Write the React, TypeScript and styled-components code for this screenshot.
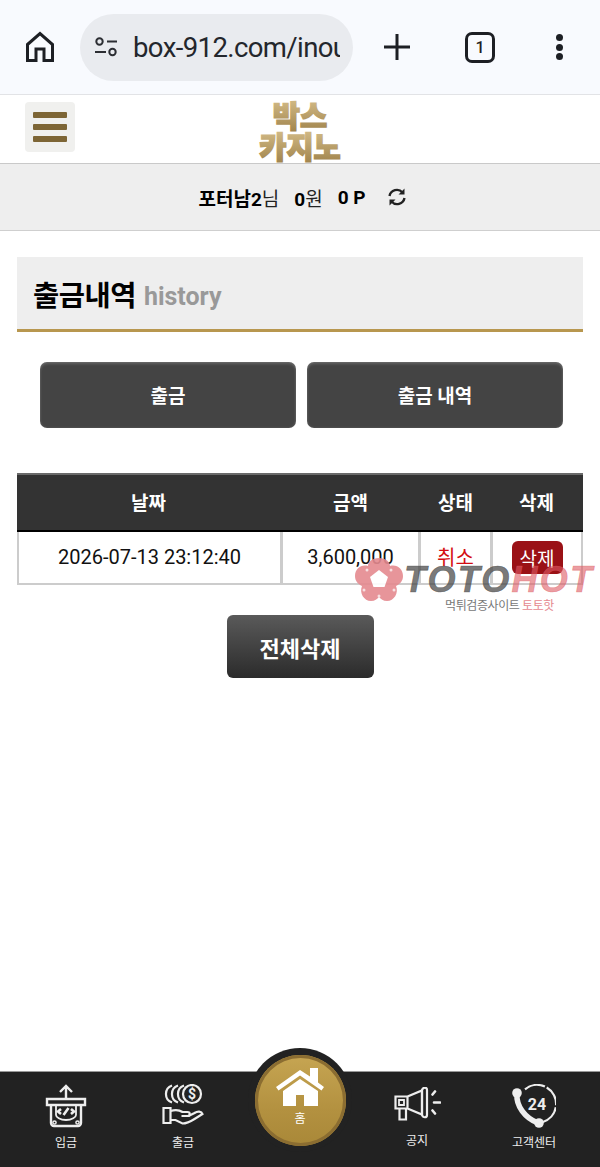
import styled, { createGlobalStyle } from "styled-components"

/////////////////////////////////////////////////////////////////////////////

const KR = `Roboto, "Noto Sans CJK KR", sans-serif`

const GlobalStyle = createGlobalStyle`
  html, body {
    margin: 0;
    padding: 0;
    background: #fff;
  }
  * {
    box-sizing: border-box;
  }
`

const App = () => {
  return (
    <Page>
      <GlobalStyle />

      <BrowserBar>
        <BarIcon>
          <svg width="30" height="32" viewBox="0 0 30 32" fill="none" stroke="#1d1f24" strokeWidth="3">
            <path d="M2.500 13.500 15 2.500l12.500 11V29.500H19V18h-8v11.500H2.500z" />
          </svg>
        </BarIcon>
        <AddressPill>
          <svg width="24" height="20" viewBox="0 0 24 20" fill="none" stroke="#2c2e33" strokeWidth="2">
            <circle cx="5.500" cy="4.500" r="3.200" />
            <path d="M13 4.500h10M1 15h11" />
            <circle cx="18.500" cy="15" r="3.200" />
          </svg>
          <AddressText>box-912.com/inou</AddressText>
        </AddressPill>
        <PlusIcon>
          <svg width="28" height="28" viewBox="0 0 28 28" stroke="#1d1f24" strokeWidth="3">
            <path d="M14 1v26M1 14h26" />
          </svg>
        </PlusIcon>
        <TabCount>1</TabCount>
        <MoreDots>
          <i />
          <i />
          <i />
        </MoreDots>
      </BrowserBar>

      <SiteHeader>
        <MenuButton>
          <i />
          <i />
          <i />
        </MenuButton>
        <svg width="100" height="68" viewBox="0 0 100 68">
          <defs>
            <linearGradient id="logoGold" x1="0" y1="0" x2="0" y2="1">
              <stop offset="0" stopColor="#dcc592" />
              <stop offset="1" stopColor="#9c7f47" />
            </linearGradient>
          </defs>
          <LogoText x="50" y="32">
            박스
          </LogoText>
          <LogoText x="50" y="63">
            카지노
          </LogoText>
        </svg>
      </SiteHeader>

      <InfoBar>
        <b>포터남2</b>님
        <InfoValue>
          <b>0</b>원
        </InfoValue>
        <InfoValue>
          <b>0 P</b>
        </InfoValue>
        <RefreshIcon>
          <svg width="20" height="20" viewBox="0 0 20 20" fill="none" stroke="#222" strokeWidth="2.400">
            <path d="M2.500 9a7.500 7.500 0 0 1 13-3.500" />
            <path d="M17.500 11a7.500 7.500 0 0 1-13 3.500" />
            <path d="M17.500 1.500v6h-6zM2.500 18.500v-6h6z" fill="#222" stroke="none" />
          </svg>
        </RefreshIcon>
      </InfoBar>

      <Main>
        <TitleBlock>
          <Title>출금내역</Title>
          <TitleSub>history</TitleSub>
        </TitleBlock>

        <TabRow>
          <TabButton>출금</TabButton>
          <TabButton>출금 내역</TabButton>
        </TabRow>

        <HistoryTable>
          <colgroup>
            <col width="266" />
            <col width="138" />
            <col width="72" />
            <col width="90" />
          </colgroup>
          <thead>
            <tr>
              <Th>날짜</Th>
              <Th>금액</Th>
              <Th>상태</Th>
              <Th>삭제</Th>
            </tr>
          </thead>
          <tbody>
            <tr>
              <Td>2026-07-13 23:12:40</Td>
              <Td>3,600,000</Td>
              <Td $red>취소</Td>
              <Td>
                <DeleteBadge>삭제</DeleteBadge>
              </Td>
            </tr>
          </tbody>
        </HistoryTable>

        <DeleteAll>전체삭제</DeleteAll>
      </Main>

      <Watermark>
        <WatermarkLogo>
          <svg width="48" height="44" viewBox="0 0 48 44">
            <g opacity="0.9">
              <path
                fill="#e58a90"
                d="M24 0c7 0 11 4 11 8 7-2 13 3 13 10 0 5-3 8-7 10 3 7-2 15-9 15-4 0-6-2-8-4-2 2-4 4-8 4-7 0-12-8-9-15-4-2-7-5-7-10C0 11 6 6 13 8c0-4 4-8 11-8z"
              />
              <path fill="#fff" d="M24 12l9 7-3.500 10h-11L15 19z" />
              <g fill="#fff" opacity="0.7">
                <circle cx="12" cy="12" r="1.500" />
                <circle cx="36" cy="12" r="1.500" />
                <circle cx="9" cy="32" r="1.500" />
                <circle cx="39" cy="32" r="1.500" />
                <circle cx="24" cy="38" r="1.500" />
              </g>
            </g>
          </svg>
          <WatermarkName>
            <span>TOTO</span>
            <em>HOT</em>
          </WatermarkName>
        </WatermarkLogo>
        <WatermarkCaption>
          먹튀검증사이트 <em>토토핫</em>
        </WatermarkCaption>
      </Watermark>

      <BottomNav>
        <NavItem>
          <DepositIcon />
          <NavLabel>입금</NavLabel>
        </NavItem>
        <NavItem>
          <WithdrawIcon />
          <NavLabel>출금</NavLabel>
        </NavItem>
        <HomeSlot>
          <HomeRing>
            <HomeCircle>
              <svg width="48" height="38" viewBox="0 0 48 38" fill="#fff">
                <path d="M24 2 0 19l2.500 3.500L24 7.500l21.500 15L48 19l-6-4.500V0h-8v8.500z" />
                <path d="M24 11 7 23v15h13V27h8v11h14V23z" />
              </svg>
              <HomeLabel>홈</HomeLabel>
            </HomeCircle>
          </HomeRing>
        </HomeSlot>
        <NavItem $top={3} $gap={10}>
          <NoticeIcon />
          <NavLabel>공지</NavLabel>
        </NavItem>
        <NavItem>
          <SupportIcon />
          <NavLabel>고객센터</NavLabel>
        </NavItem>
      </BottomNav>
    </Page>
  )
}

/////////////////////////////////////////////////////////////////////////////

function DepositIcon() {
  return (
    <svg width="42" height="44" viewBox="0 0 42 44" fill="none" stroke="#eee" strokeWidth="2.400">
      <path d="M21 15V2M15 8l6-6 6 6" />
      <path d="M2 15h38v6H2z" />
      <path d="M6 21v18a3 3 0 0 0 3 3h24a3 3 0 0 0 3-3V21" />
      <path d="M11 21v10c0 2 4 5 10 5s10-3 10-5V21" strokeWidth="1.800" />
      <path d="M16 25l-3 2.500 3 2.500M26 25l3 2.500-3 2.500M18.500 31l5-7" strokeWidth="2.600" />
      <circle cx="9.500" cy="38.500" r="1.600" strokeWidth="1.500" />
      <circle cx="32.500" cy="38.500" r="1.600" strokeWidth="1.500" />
    </svg>
  )
}

function WithdrawIcon() {
  return (
    <svg width="42" height="44" viewBox="0 0 42 44" fill="none" stroke="#eee" strokeWidth="2.200">
      <path d="M10 1.500a9 9 0 0 0 0 17M16 1.500a9 9 0 0 0 0 17M22 1.500a9 9 0 0 0 0 17" />
      <circle cx="30" cy="10" r="9" />
      <text x="30" y="15" textAnchor="middle" fontSize="14" fontWeight="700" fill="#eee" stroke="none" fontFamily="Roboto">
        $
      </text>
      <path d="M1.500 24h7v15h-7z" />
      <path d="M8.500 27c6-2 9-1 12 1h5c3 0 3 4 0 4h-6" />
      <path d="M8.500 36h5l7 3.500c4 0 8-2 12-4.500l8-5c-1-3-5-3-8-1l-6 3" />
    </svg>
  )
}

function NoticeIcon() {
  return (
    <svg width="47" height="34" viewBox="0 0 47 34" fill="none" stroke="#eee" strokeWidth="2.200">
      <path d="M1.500 9.500h12v12h-12zM13.500 9.500 28 3.500v24l-14.500-6" />
      <path d="M28 3c1-3 5-3 5 0v25c0 3-4 3-5 0z" />
      <path d="M5 13h5v5H5z" strokeWidth="1.800" />
      <path d="M5.500 21.500V32.500h6.500v-11" />
      <path d="M38.500 7.500l2.500-3M40 15.500h6M38.500 23.500l2.500 3" strokeLinecap="round" strokeWidth="2.600" />
    </svg>
  )
}

function SupportIcon() {
  return (
    <svg width="44" height="44" viewBox="0 0 44 44" fill="none" stroke="#eee">
      <path d="M13 5.300A19 19 0 1 1 30 38.300" strokeWidth="2.200" strokeDasharray="21 2" />
      <path d="M5 10c-1 12 8 24 21 29" strokeWidth="5.500" />
      <circle cx="5" cy="9" r="4.800" fill="#eee" stroke="none" />
      <circle cx="27" cy="39" r="4.800" fill="#eee" stroke="none" />
      <text x="25" y="25.500" textAnchor="middle" fontSize="16" fontWeight="700" fill="#eee" stroke="none" fontFamily="Roboto">
        24
      </text>
    </svg>
  )
}

/////////////////////////////////////////////////////////////////////////////

const Page = styled.div`
  position: relative;
  width: 600px;
  height: 1167px;
  overflow: hidden;
  display: flex;
  flex-direction: column;
  background: #fff;
  font-family: ${KR};
  color: #000;
`

const BrowserBar = styled.div`
  height: 95px;
  flex: none;
  display: flex;
  align-items: center;
  padding: 0 0 0 25px;
  background: #f8fafe;
  border-bottom: 1px solid #e2e3e6;
`

const BarIcon = styled.div`
  width: 30px;
  height: 32px;
  margin-right: 25px;
  display: flex;
`

const AddressPill = styled.div`
  width: 273px;
  height: 67px;
  flex: none;
  display: flex;
  align-items: center;
  gap: 15px;
  padding: 0 13px 0 14px;
  border-radius: 34px;
  background: #e9ebef;
`

const AddressText = styled.div`
  flex: 1;
  overflow: hidden;
  white-space: nowrap;
  font-family: Roboto, sans-serif;
  font-size: 27.5px;
  letter-spacing: -0.6px;
  color: #23262c;
`

const PlusIcon = styled.div`
  width: 28px;
  height: 28px;
  margin-left: 30px;
  display: flex;
`

const TabCount = styled.div`
  width: 30px;
  height: 31px;
  margin-left: 54px;
  display: flex;
  align-items: center;
  justify-content: center;
  border: 3px solid #1d1f24;
  border-radius: 7px;
  font-family: Roboto, sans-serif;
  font-size: 16px;
  font-weight: 500;
  color: #1d1f24;
`

const MoreDots = styled.div`
  margin-left: 61px;
  display: flex;
  flex-direction: column;
  gap: 2.5px;

  i {
    width: 7px;
    height: 7px;
    border-radius: 50%;
    background: #1d1f24;
  }
`

const SiteHeader = styled.header`
  height: 69px;
  flex: none;
  position: relative;
  display: flex;
  align-items: flex-start;
  justify-content: center;
  border-bottom: 1px solid #c9c9c9;
`

const MenuButton = styled.div`
  position: absolute;
  left: 25px;
  top: 7px;
  width: 50px;
  height: 50px;
  display: flex;
  flex-direction: column;
  align-items: center;
  justify-content: center;
  gap: 6px;
  border-radius: 4px;
  background: #f0f0ee;

  i {
    width: 34px;
    height: 6px;
    border-radius: 1px;
    background: #7d6535;
  }
`

const LogoText = styled.text`
  text-anchor: middle;
  font-family: "Noto Sans CJK KR", sans-serif;
  font-size: 29.5px;
  font-weight: 900;
  fill: url(#logoGold);
  stroke: url(#logoGold);
  stroke-width: 1.5px;
`

const InfoBar = styled.div`
  height: 67px;
  flex: none;
  display: flex;
  align-items: center;
  justify-content: center;
  padding-left: 5px;
  background: #eee;
  border-bottom: 1px solid #cfcfcf;
  font-size: 19px;
  color: #222;

  b {
    font-weight: 700;
    color: #000;
  }
`

const InfoValue = styled.span`
  margin-left: 15px;
`

const RefreshIcon = styled.span`
  display: flex;
  margin-left: 21px;
`

const Main = styled.main`
  padding: 26px 17px 0;
  display: flex;
  flex-direction: column;
`

const TitleBlock = styled.div`
  height: 75px;
  display: flex;
  align-items: center;
  gap: 8px;
  padding: 1px 16px 0;
  background: #eee;
  border-bottom: 3px solid #b8974f;
`

const Title = styled.h2`
  margin: 0;
  font-size: 28.500px;
  font-weight: 700;
  letter-spacing: -0.5px;
`

const TitleSub = styled.span`
  font-size: 25px;
  font-weight: 700;
  color: #999;
  margin-top: 6px;
`

const TabRow = styled.div`
  display: grid;
  grid-template-columns: 256px 256px;
  gap: 11px;
  padding-left: 23px;
  margin-top: 30px;
`

const TabButton = styled.button`
  height: 66px;
  border: 0;
  padding: 0 0 2px;
  border-radius: 7px;
  background: #444;
  box-shadow: inset 0 2px 3px rgba(255, 255, 255, 0.16), inset 0 0 3px rgba(255, 255, 255, 0.12);
  color: #fff;
  font-family: ${KR};
  font-size: 19px;
  font-weight: 700;
`

const HistoryTable = styled.table`
  width: 566px;
  margin-top: 45px;
  border-collapse: separate;
  border-spacing: 0;
  table-layout: fixed;
`

const Th = styled.th`
  height: 59px;
  padding: 0 3px 3px 0;
  background: #333;
  border-top: 2px solid #6a6a6a;
  border-bottom: 2px solid #000;
  color: #fff;
  font-size: 19px;
  font-weight: 700;
`

const Td = styled.td<{ $red?: boolean }>`
  height: 53px;
  padding: 0 0 2px;
  text-align: center;
  font-size: 20px;
  color: ${({ $red }) => ($red ? "#d40d12" : "#111")};
  border-style: solid;
  border-color: #ccc;
  border-width: 0 3px 2px 0;

  &:first-child {
    border-left-width: 2px;
  }
  &:last-child {
    border-right-width: 2px;
  }
`

const DeleteBadge = styled.span`
  display: inline-flex;
  align-items: center;
  justify-content: center;
  width: 51px;
  height: 33px;
  margin-top: 2px;
  border-radius: 6px;
  background: #9a1116;
  color: #fff;
  font-size: 19px;
`

const DeleteAll = styled.button`
  align-self: center;
  width: 147px;
  height: 63px;
  margin-top: 30px;
  border: 0;
  border-radius: 6px;
  background: linear-gradient(180deg, #5a5a5a 0%, #2b2b2b 100%);
  color: #fff;
  font-family: ${KR};
  font-size: 22px;
  font-weight: 700;
`

const Watermark = styled.div`
  position: absolute;
  left: 355px;
  top: 558px;
  width: 245px;
  pointer-events: none;
`

const WatermarkLogo = styled.div`
  display: flex;
  align-items: center;
`

const WatermarkName = styled.div`
  margin-left: 1px;
  font-family: "Liberation Sans", sans-serif;
  font-size: 36px;
  font-style: italic;
  font-weight: 700;
  letter-spacing: 2.2px;
  white-space: nowrap;
  -webkit-text-stroke: 0.6px currentColor;

  span {
    color: rgba(70, 70, 70, 0.72);
  }
  em {
    color: rgba(222, 90, 100, 0.6);
  }
`

const WatermarkCaption = styled.div`
  margin: -6px 0 0 90px;
  font-size: 12px;
  letter-spacing: -0.4px;
  color: #777;

  em {
    font-style: normal;
    color: #e58a90;
  }
`

const BottomNav = styled.nav`
  position: absolute;
  left: 0;
  right: 0;
  bottom: 0;
  height: 96px;
  display: grid;
  grid-template-columns: 132px 102px 132px 102px 132px;
  padding-top: 12px;
  background: #222;
  border-top: 1px solid #999;
`

const NavItem = styled.div<{ $top?: number; $gap?: number }>`
  display: flex;
  flex-direction: column;
  align-items: center;
  padding-top: ${({ $top }) => $top ?? 0}px;
  gap: ${({ $gap }) => $gap ?? 5}px;

  svg {
    flex: none;
  }
`

const NavLabel = styled.span`
  color: #eee;
  font-size: 12px;
`

const HomeSlot = styled.div`
  position: relative;
`

const HomeRing = styled.div`
  position: absolute;
  left: 50%;
  top: -36px;
  width: 104px;
  height: 104px;
  margin-left: -52px;
  border-radius: 50%;
  background: #222;
  display: flex;
  align-items: center;
  justify-content: center;
`

const HomeCircle = styled.div`
  width: 91px;
  height: 91px;
  border-radius: 50%;
  display: flex;
  flex-direction: column;
  align-items: center;
  padding-top: 13px;
  background: linear-gradient(180deg, #c6a552 0%, #b39140 60%, #a98838 100%);
  box-shadow: inset 0 0 0 3px #8b6d31;
`

const HomeLabel = styled.span`
  margin-top: 3px;
  color: #fff;
  font-size: 12px;
`

export default App
